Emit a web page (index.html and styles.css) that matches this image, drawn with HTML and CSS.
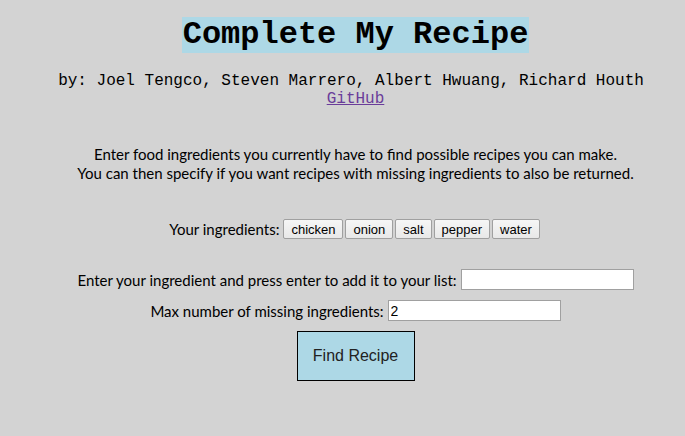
FILE: index.html
```html
<!DOCTYPE html>
<html>
<head>
<meta charset="utf-8">
<link rel="stylesheet" href="styles.css">
</head>
<body>
<div class="page">
  <h1 class="title">Complete My Recipe</h1>
  <div class="authors">by: Joel Tengco, Steven Marrero, Albert Hwuang, Richard Houth</div>
  <a class="gh" href="#">GitHub</a>
  <div class="intro">
    <div>Enter food ingredients you currently have to find possible recipes you can make.</div>
    <div>You can then specify if you want recipes with missing ingredients to also be returned.</div>
  </div>
  <div class="ingredients">
    <span>Your ingredients:</span>
    <button class="chip">chicken</button><button class="chip">onion</button><button class="chip">salt</button><button class="chip">pepper</button><button class="chip">water</button>
  </div>
  <div class="row row-add">
    <label>Enter your ingredient and press enter to add it to your list:</label>
    <input class="field field-wide" type="text">
  </div>
  <div class="row row-max">
    <label>Max number of missing ingredients:</label>
    <input class="field field-max" type="text" value="2">
  </div>
  <button class="find">Find Recipe</button>
</div>
</body>
</html>
```

FILE: styles.css
```css
html, body {
  margin: 0;
  padding: 0;
  background: #d3d3d3;
}
body {
  font-family: "Lato", "Open Sans", sans-serif;
  font-size: 15px;
  color: #000;
}
.page {
  display: flex;
  flex-direction: column;
  align-items: center;
  padding-top: 17px;
  padding-left: 26px;
}
.title {
  margin: 0;
  font-family: "Liberation Mono", monospace;
  font-weight: bold;
  font-size: 32px;
  line-height: 36px;
  background: #add8e6;
  padding: 0 1px;
}
.authors {
  margin-top: 19px;
  padding-right: 9px;
  font-family: "Liberation Mono", monospace;
  font-size: 16px;
  line-height: 18px;
}
.gh {
  font-family: "Liberation Mono", monospace;
  font-size: 16px;
  line-height: 18px;
  color: #6a3d9a;
}
.intro {
  margin-top: 37px;
  text-align: center;
  line-height: 19px;
}
.ingredients {
  margin-top: 36px;
  display: flex;
  align-items: center;
}
.ingredients span {
  margin-right: 4px;
}
.chip {
  font-family: "Liberation Sans", Arial, sans-serif;
  font-size: 13px;
  height: 20px;
  padding: 0 7px;
  margin: 0 2px 0 0;
  background: linear-gradient(#f6f6f6, #e8e8e8);
  border: 1px solid #a0a0a0;
  border-radius: 2px;
  color: #000;
}
.row {
  display: flex;
  align-items: center;
  gap: 4px;
}
.row-add {
  margin-top: 30px;
}
.row-max {
  margin-top: 10px;
}
.field {
  font-family: "Liberation Sans", Arial, sans-serif;
  font-size: 14px;
  height: 21px;
  box-sizing: border-box;
  border: 1px solid #a0a0a0;
  background: #fff;
  padding: 1px 2px;
  margin: 0;
}
.field-wide { width: 173px; }
.field-max { width: 173px; }
.find {
  margin-top: 10px;
  width: 118px;
  height: 50px;
  background: #add8e6;
  border: 1px solid #000;
  font-family: "Liberation Sans", Arial, sans-serif;
  font-size: 16px;
  color: #222;
  padding: 0;
}
```
